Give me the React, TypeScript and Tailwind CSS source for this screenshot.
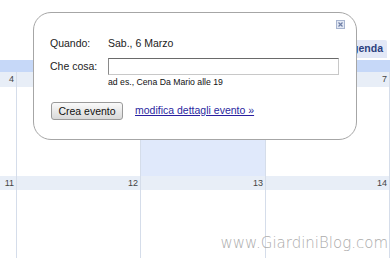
import React from "react";

const cols = ["w-[16px]", "w-[124px]", "w-[125px]", "w-[124px]", "flex-1"];

function WeekRow({ nums, bodyH, numH, highlight }: { nums: string[]; bodyH: string; numH: string; highlight?: number }) {
  return (
    <div className="flex flex-col">
      <div className={`flex ${numH} bg-[#e8eef7]`}>
        {nums.map((n, i) => (
          <div
            key={i}
            className={`${cols[i]} shrink-0 ${i > 0 ? "border-l border-[#d5ddea]" : ""} flex items-center justify-end pr-[2px] text-[9px] leading-none text-[#444]`}
          >
            {n}
          </div>
        ))}
      </div>
      <div className={`flex ${bodyH}`}>
        {nums.map((_, i) => (
          <div
            key={i}
            className={`${cols[i]} shrink-0 ${i > 0 ? "border-l border-[#d5ddea]" : ""} ${highlight === i ? "bg-[#e0e9fb]" : "bg-white"}`}
          />
        ))}
      </div>
    </div>
  );
}

export default function App() {
  return (
    <div
      className="relative w-[390px] h-[258px] overflow-hidden bg-white"
      style={{ fontFamily: '"Liberation Sans", Arial, sans-serif' }}
    >
      {/* tabs row */}
      <div className="h-[60px] flex items-end justify-end pr-[3px] pb-[2px]">
        <div className="h-[18px] px-[4px] bg-[#e3e8f6] rounded-t-[2px] flex items-center text-[10.5px] font-bold text-[#2c3f7e]">
          Agenda
        </div>
      </div>
      {/* header band */}
      <div className="h-[12px] bg-[#c6d8f8]" />
      <WeekRow nums={["4", "", "", "7", ""]} numH="h-[15px]" bodyH="h-[89px]" highlight={2} />
      <WeekRow nums={["11", "12", "13", "14", ""]} numH="h-[14px]" bodyH="h-[68px]" />

      {/* popup */}
      <div className="absolute left-[33px] top-[12px] w-[324px] h-[128px] bg-white border border-[#a6a6a6] rounded-[18px] pl-[16px] pt-[24px] text-[10.5px] text-[#222]">
        <div className="absolute right-[11px] top-[7px]">
          <svg width="9" height="9" viewBox="0 0 9 9">
            <rect x="0.5" y="0.5" width="8" height="8" fill="#e2e8f4" stroke="#a7b4cf" />
            <path d="M2.5 2.5 L6.5 6.5 M6.5 2.5 L2.5 6.5" stroke="#6f7fa6" strokeWidth="1.2" />
          </svg>
        </div>
        <div className="flex h-[13px] items-center">
          <div className="w-[58px]">Quando:</div>
          <div>Sab., 6 Marzo</div>
        </div>
        <div className="flex mt-[8px]">
          <div className="w-[58px] pt-[2px] leading-[13px]">Che cosa:</div>
          <div className="flex flex-col">
            <div className="w-[231px] h-[17px] border border-[#c8c8c8] border-t-[#6a6a6a] border-l-[#8a8a8a] bg-white" />
            <div className="mt-[2px] h-[11px] leading-[11px] text-[8.7px] text-[#111]">ad es., Cena Da Mario alle 19</div>
          </div>
        </div>
        <div className="flex items-center mt-[14px] gap-[12px]">
          <button className="w-[72px] h-[18px] ml-[1px] rounded-[3px] border border-[#9a9a9a] bg-gradient-to-b from-[#fafafa] to-[#d9d9d9] text-[10.5px] text-[#111] leading-none">
            Crea evento
          </button>
          <a className="text-[#2a1fa0] underline text-[10.5px]">modifica dettagli evento »</a>
        </div>
      </div>

      {/* watermark */}
      <div
        className="absolute right-[2px] top-[234px] text-[15px] leading-[18px] font-light text-[#ababab]"
        style={{ fontFamily: '"DejaVu Sans", Verdana, sans-serif' }}
      >
        www.GiardiniBlog.com
      </div>
    </div>
  );
}
